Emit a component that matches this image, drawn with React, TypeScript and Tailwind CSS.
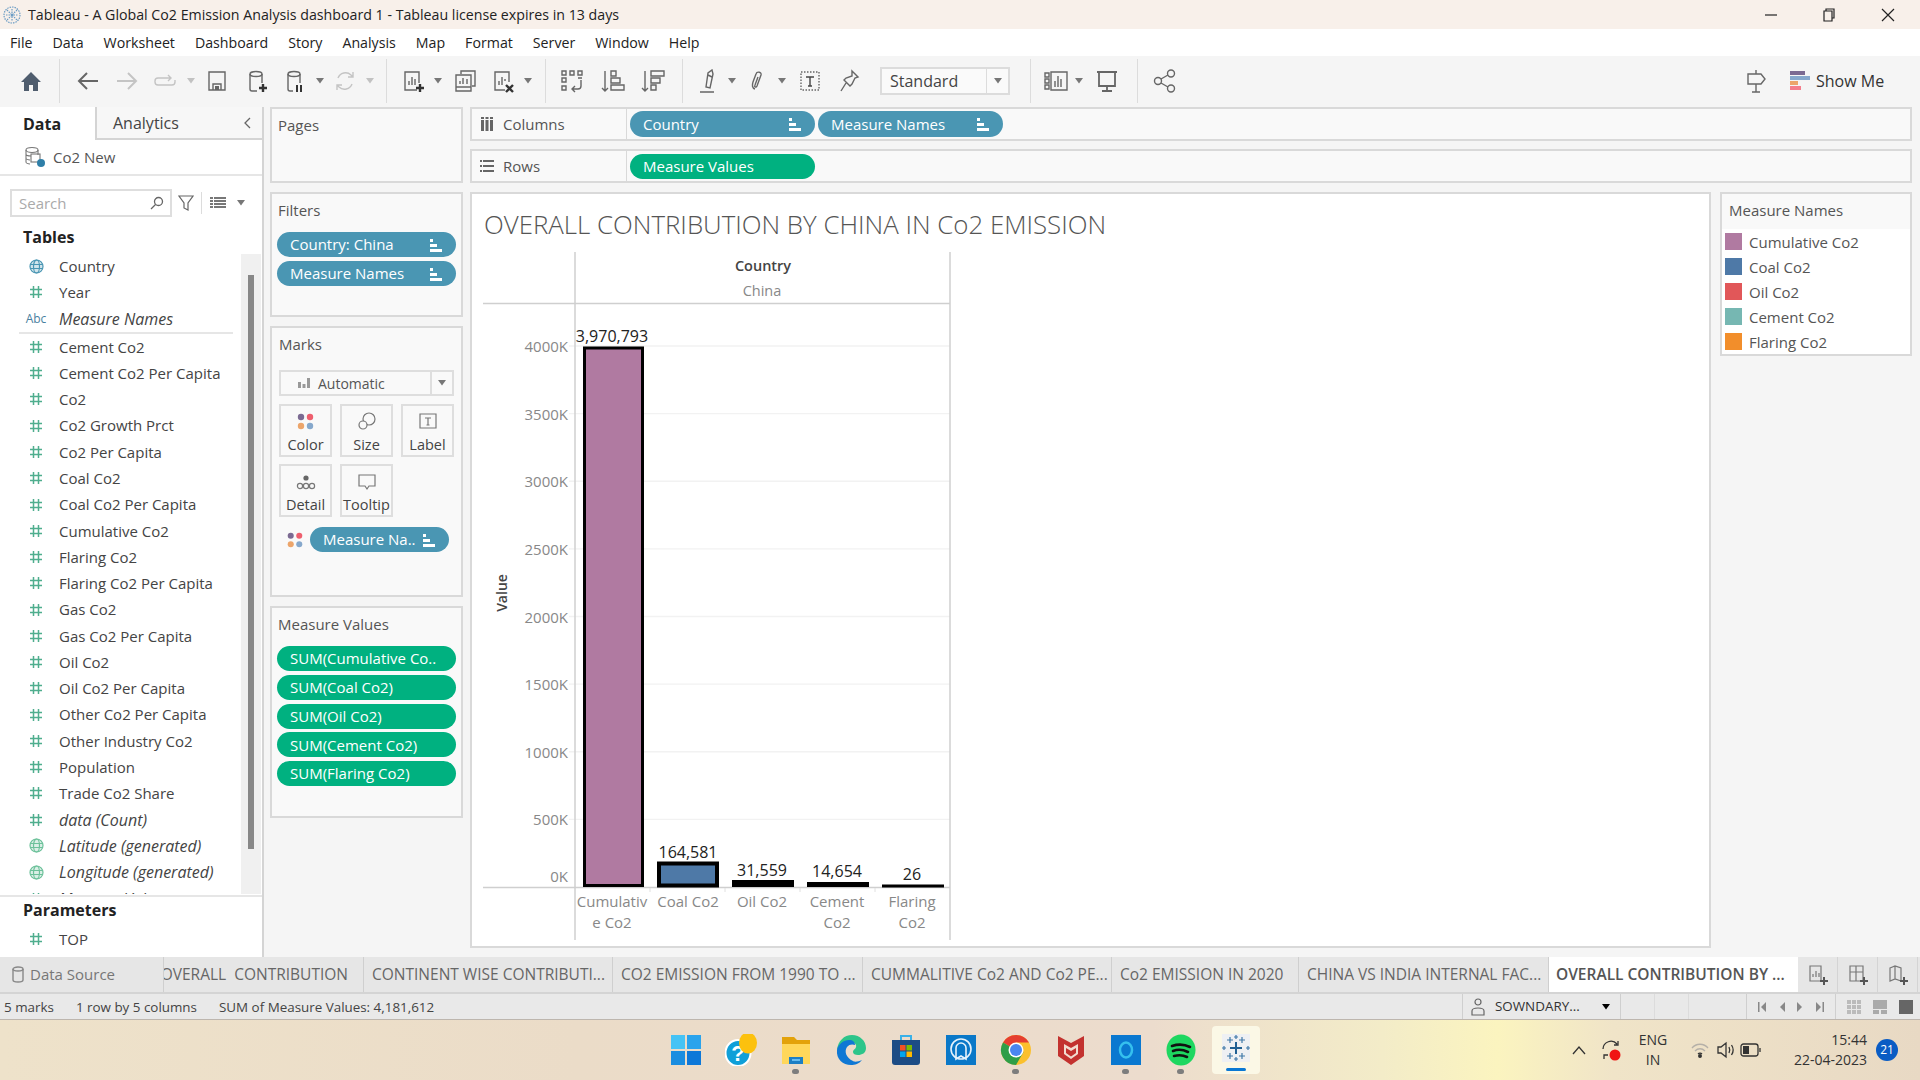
import type { ReactNode } from "react";

const BLUE = "bg-[#4a96b3]";
const GREEN = "bg-[#00b180]";

function SortMark({ className = "" }: { className?: string }) {
  return (
    <svg width="14" height="14" viewBox="0 0 14 14" className={className} fill="#fff">
      <rect x="1" y="1" width="3" height="3" />
      <rect x="1" y="6" width="7" height="3" />
      <rect x="1" y="11" width="12" height="3" />
    </svg>
  );
}

function Pill({ label, color, sort, className = "" }: { label: string; color: string; sort?: boolean; className?: string }) {
  return (
    <div className={`flex h-[25px] items-center justify-between rounded-full pl-[13px] pr-[13px] text-[15px] text-white ${color} ${className}`}>
      <span className="whitespace-nowrap">{label}</span>
      {sort && <SortMark />}
    </div>
  );
}

function Caret({ className = "" }: { className?: string }) {
  return (
    <svg width="8" height="6" viewBox="0 0 8 6" className={`shrink-0 ${className}`}>
      <path d="M0 0h8L4 5.5z" fill="#777" />
    </svg>
  );
}

function Sep({ className = "" }: { className?: string }) {
  return <div className={`h-[44px] w-px shrink-0 bg-[#dcdcdc] ${className}`} />;
}

function Tool({ className = "", faint, children }: { className?: string; faint?: boolean; children: ReactNode }) {
  return (
    <svg
      width="24"
      height="24"
      viewBox="0 0 24 24"
      fill="none"
      stroke={faint ? "#c4c4c4" : "#666"}
      strokeWidth="1.4"
      className={`shrink-0 ${className}`}
    >
      {children}
    </svg>
  );
}

function Toolbar() {
  return (
    <div className="flex h-[51px] shrink-0 items-center bg-[#f5f5f5] pb-[2px]">
      <Tool className="ml-[19px]">
        <path d="M12 3 2 13h3v9h5v-6h4v6h5v-9h3z" fill="#4f5d6e" stroke="none" />
      </Tool>
      <Sep className="ml-[16px]" />
      <Tool className="ml-[16px]"><path d="M22 12H3m8-8-8 8 8 8" strokeWidth="2" stroke="#666" /></Tool>
      <Tool className="ml-[15px]" faint><path d="M2 12h19m-8-8 8 8-8 8" strokeWidth="2" /></Tool>
      <Tool className="ml-[14px]" faint><path d="M17 9H5a3 3 0 0 0-3 3v1a3 3 0 0 0 3 3h14a3 3 0 0 0 3-3v-2M15 6l3 3-3 3" /></Tool>
      <Caret className="ml-[10px] opacity-40" />
      <Tool className="ml-[10px]"><path d="M4 3h16v18H4zM8 21v-6h8v6" /><rect x="10" y="17" width="4" height="4" fill="#666" stroke="none" /></Tool>
      <Tool className="ml-[16px]">
        <ellipse cx="11" cy="5" rx="6" ry="2.5" /><path d="M5 5v15a2 2 0 0 0 2 2h5M17 5v9" />
        <path d="M18 15v8m-4-4h8" strokeWidth="2.4" stroke="#333" />
      </Tool>
      <Tool className="ml-[14px]">
        <ellipse cx="11" cy="5" rx="6" ry="2.5" /><path d="M5 5v15a2 2 0 0 0 2 2h3M17 5v9" />
        <path d="M14 16v7m4-7v7" strokeWidth="2" stroke="#333" />
      </Tool>
      <Caret className="ml-[9px]" />
      <Tool className="ml-[9px]" faint><path d="M5 9a8 8 0 0 1 13-3l2 2M19 15a8 8 0 0 1-13 3l-2-2M20 3v5h-5M4 21v-5h5" /></Tool>
      <Caret className="ml-[9px] opacity-40" />
      <Sep className="ml-[12px]" />
      <Tool className="ml-[14px]">
        <path d="M16 21H4V3h14v11M8 16v-4m3 4V8m3 8v-6" />
        <path d="M19 15v8m-4-4h8" strokeWidth="2.4" stroke="#333" />
      </Tool>
      <Caret className="ml-[9px]" />
      <Tool className="ml-[11px]">
        <path d="M8 5V2h14v15h-3M3 6h15v12H3zM3 18v4h15v-4M7 15v-3m3 3V9m4 6v-5" />
      </Tool>
      <Tool className="ml-[14px]">
        <path d="M14 21H4V3h14v10M8 16v-4m3 4V8m3 4V10" />
        <path d="m15 16 7 7m0-7-7 7" strokeWidth="2.4" stroke="#333" />
      </Tool>
      <Caret className="ml-[9px]" />
      <Sep className="ml-[13px]" />
      <Tool className="ml-[14px]">
        <path d="M2 2h4v4H2zM10 2h4v4h-4zM18 2h4v4h-4zM2 9h4v4H2zM2 17h4v4H2zM18 9h4M21 11v6a3 3 0 0 1-3 3h-5m2-3-3 3 3 3" />
      </Tool>
      <Tool className="ml-[17px]"><path d="M4 2v20M1 19l3 3 3-3M10 2h5v5h-5zM10 9h9v5h-9zM10 16h13v5H10z" /></Tool>
      <Tool className="ml-[16px]"><path d="M4 2v20M1 19l3 3 3-3M10 2h13v5H10zM10 9h9v5h-9zM10 16h5v5h-5z" /></Tool>
      <Sep className="ml-[17px]" />
      <Tool className="ml-[15px]"><path d="m8 18 2-14 4-3 1 4-3 14zM2 23h14M10 6l4 2" /></Tool>
      <Caret className="ml-[6px]" />
      <Tool className="ml-[10px]"><path d="M9 20c-3-1-3-4-2-7l3-8c1-3 6-2 5 1l-4 11c-1 2-3 1-2-1l3-8" /></Tool>
      <Caret className="ml-[8px]" />
      <Tool className="ml-[12px]">
        <path d="M3 3h18v18H3z" strokeDasharray="1.5 1.5" />
        <path d="M8 8h8M12 8v9M10 17h4" stroke="#444" />
      </Tool>
      <Tool className="ml-[16px]"><path d="m14 2 6 6-3 1-3 6-2 2-6-6 2-2 6-2zM8 14l-5 8" /></Tool>
      <div className="ml-[18px] flex h-[28px] w-[130px] shrink-0 items-center border-2 border-[#dcdcdc] bg-[#fafafa] pl-[8px] text-[16px] text-[#444]">
        <span className="flex-1">Standard</span>
        <div className="flex h-full w-[22px] items-center justify-center border-l border-[#dcdcdc]"><Caret /></div>
      </div>
      <Sep className="ml-[20px]" />
      <Tool className="ml-[13px]">
        <path d="M1 4h4v4H1zM1 10h4v4H1zM1 16h4v4H1zM7 3h16v18H7zM11 18v-6m3 6V7m3 11v-8" />
      </Tool>
      <Caret className="ml-[7px]" />
      <Tool className="ml-[12px]"><path d="M2 3h20M4 3v14h16V3M12 17v5M7 22h10" strokeWidth="1.8" /></Tool>
      <Sep className="ml-[18px]" />
      <Tool className="ml-[15px]"><circle cx="5" cy="12" r="3.5" /><circle cx="18" cy="4.5" r="3.5" /><circle cx="18" cy="19.5" r="3.5" /><path d="m8 10 7-4M8 14l7 4" /></Tool>
      <Tool className="ml-[567px]"><path d="M12 1v4M12 15v8M8 23h8M4 5h13l4 5-4 5H4z" /></Tool>
      <svg width="20" height="20" viewBox="0 0 20 20" className="ml-[22px] shrink-0">
        <rect y="0" width="15" height="4" fill="#7b6a92" />
        <rect y="5" width="20" height="4" fill="#86a8cc" />
        <rect y="10" width="8" height="4" fill="#eca56b" />
        <rect y="15" width="11" height="4" fill="#f47e8c" />
      </svg>
      <span className="ml-[6px] text-[16px] text-[#333]">Show Me</span>
    </div>
  );
}

const FIELDS: [string, string?][] = [
  ["Cement Co2"], ["Cement Co2 Per Capita"], ["Co2"], ["Co2 Growth Prct"], ["Co2 Per Capita"], ["Coal Co2"],
  ["Coal Co2 Per Capita"], ["Cumulative Co2"], ["Flaring Co2"], ["Flaring Co2 Per Capita"], ["Gas Co2"],
  ["Gas Co2 Per Capita"], ["Oil Co2"], ["Oil Co2 Per Capita"], ["Other Co2 Per Capita"], ["Other Industry Co2"],
  ["Population"], ["Trade Co2 Share"], ["data (Count)", "i"], ["Latitude (generated)", "g"], ["Longitude (generated)", "g"],
  ["Measure Values", "i"],
];

function Hash() {
  return (
    <svg width="14" height="14" viewBox="0 0 14 14" stroke="#4fae8e" strokeWidth="1.5" fill="none">
      <path d="M4.5 1v12M9.5 1v12M1 4.5h12M1 9.5h12" />
    </svg>
  );
}

function Globe({ color }: { color: string }) {
  return (
    <svg width="15" height="15" viewBox="0 0 15 15" fill="none" stroke={color} strokeWidth="1.2">
      <circle cx="7.5" cy="7.5" r="6.5" fill={color} fillOpacity=".25" />
      <ellipse cx="7.5" cy="7.5" rx="3" ry="6.5" />
      <path d="M1 5.5h13M1 9.5h13" />
    </svg>
  );
}

function FieldRow({ icon, label, italic }: { icon: ReactNode; label: string; italic?: boolean }) {
  return (
    <div className="flex h-[26.27px] shrink-0 items-center whitespace-nowrap text-[15px] text-[#444]">
      <div className="flex w-[59px] shrink-0 justify-center pl-[14px] pr-[1px]">{icon}</div>
      <span className={italic ? "text-[16px] italic" : ""}>{label}</span>
    </div>
  );
}

function DataPane() {
  return (
    <div className="flex w-[264px] shrink-0 flex-col border-r-2 border-[#d4d4d4] bg-white">
      <div className="flex h-[33px] text-[16px]">
        <div className="flex w-[97px] items-center border-r-2 border-[#d4d4d4] pl-[23px] font-bold text-[#222]">Data</div>
        <div className="flex flex-1 items-center justify-between border-b-2 border-[#d4d4d4] bg-[#f7f7f7] pl-[16px] pr-[11px] text-[#444]">
          <span>Analytics</span>
          <svg width="8" height="12" viewBox="0 0 8 12" fill="none" stroke="#666" strokeWidth="1.3"><path d="M7 1 2 6l5 5" /></svg>
        </div>
      </div>
      <div className="flex h-[36px] items-center border-b-2 border-[#e6e6e6] pl-[24px] text-[15px] text-[#555]">
        <svg width="22" height="22" viewBox="0 0 22 22" fill="none" stroke="#777" strokeWidth="1.1">
          <ellipse cx="8" cy="4" rx="6" ry="2.5" />
          <path d="M2 4v12c0 1 2 2 4 2M14 4v5M2 8c0 1 2 2 5 2M2 12c0 1 2 2 4 2" />
          <rect x="7" y="8" width="9" height="8" />
          <circle cx="17" cy="17" r="4" fill="#2f7fa8" stroke="none" />
        </svg>
        <span className="ml-[7px]">Co2 New</span>
      </div>
      <div className="flex h-[44px] items-center pl-[10px] pt-[10px]">
        <div className="flex h-[28px] w-[162px] items-center justify-between border-2 border-[#dedede] pl-[7px] pr-[6px] text-[15px] text-[#aaa]">
          <span>Search</span>
          <svg width="14" height="14" viewBox="0 0 14 14" fill="none" stroke="#666" strokeWidth="1.3"><circle cx="8.5" cy="5.5" r="4" /><path d="M5.5 8.5 1 13" /></svg>
        </div>
        <svg width="16" height="16" viewBox="0 0 16 16" fill="none" stroke="#666" strokeWidth="1.2" className="ml-[6px]"><path d="M1 1h14L10 8v7l-4-2V8z" /></svg>
        <div className="ml-[7px] h-[22px] w-px bg-[#dcdcdc]" />
        <svg width="16" height="12" viewBox="0 0 16 12" className="ml-[8px]" fill="#777">
          <path d="M0 0h3v2H0zM4 0h12v2H4zM0 3h3v2H0zM4 3h12v2H4zM0 6h3v2H0zM4 6h12v2H4zM0 9h3v2H0zM4 9h12v2H4z" />
        </svg>
        <Caret className="ml-[11px]" />
      </div>
      <div className="flex h-[34px] items-center pl-[23px] text-[16px] font-bold text-[#222]">Tables</div>
      <div className="flex h-[640px] shrink-0">
        <div className="-mt-[1px] flex w-[241px] shrink-0 flex-col overflow-hidden">
          <FieldRow icon={<Globe color="#4a96b3" />} label="Country" />
          <FieldRow icon={<Hash />} label="Year" />
          <FieldRow icon={<span className="text-[12px] text-[#4a7fa0]">Abc</span>} label="Measure Names" italic />
          <div className="ml-[19px] h-[2px] w-[214px] shrink-0 bg-[#e6e6e6]" />
          {FIELDS.map(([label, kind]) => (
            <FieldRow key={label} icon={kind === "g" ? <Globe color="#6cc19a" /> : <Hash />} label={label} italic={!!kind} />
          ))}
        </div>
        <div className="w-[20px] bg-[#f0f0f0] pl-[7px] pt-[21px]">
          <div className="h-[574px] w-[6px] bg-[#888]" />
        </div>
      </div>
      <div className="mt-[1px] h-[2px] bg-[#e6e6e6]" />
      <div className="flex h-[29px] items-center pb-[4px] pl-[23px] text-[16px] font-bold text-[#222]">Parameters</div>
      <FieldRow icon={<Hash />} label="TOP" />
    </div>
  );
}

function Card({ title, className = "", children }: { title: string; className?: string; children?: ReactNode }) {
  return (
    <div className={`shrink-0 border-2 border-[#d9d9d9] bg-[#f9f9f9] px-[5px] ${className}`}>
      <div className="flex h-[33px] items-center pl-[1px] text-[15px] text-[#555]">{title}</div>
      {children}
    </div>
  );
}

function MarkBtn({ label, children }: { label: string; children: ReactNode }) {
  return (
    <div className="flex h-[53px] w-[53px] flex-col items-center border-2 border-[#dedede] pt-[6px] text-[14.5px] leading-[20px] text-[#444]">
      <svg width="20" height="20" viewBox="0 0 20 20" fill="none" stroke="#777" strokeWidth="1.2">{children}</svg>
      <span className="mt-[3px]">{label}</span>
    </div>
  );
}

function ColorDots() {
  return (
    <>
      <circle cx="5" cy="5" r="3.2" fill="#7b6a92" stroke="none" />
      <circle cx="14" cy="5" r="3.2" fill="#ee5f6e" stroke="none" />
      <circle cx="5" cy="14" r="3.2" fill="#eca56b" stroke="none" />
      <circle cx="14" cy="14" r="3.2" fill="#86a8cc" stroke="none" />
    </>
  );
}

function Cards() {
  return (
    <div className="ml-[6px] flex w-[193px] shrink-0 flex-col gap-[9px]">
      <Card title="Pages" className="h-[76px]" />
      <Card title="Filters" className="h-[125px]">
        <div className="mt-[5px] flex flex-col gap-[4px]">
          <Pill label="Country: China" color={BLUE} sort />
          <Pill label="Measure Names" color={BLUE} sort />
        </div>
      </Card>
      <Card title="Marks" className="h-[271px] pl-[6px]">
        <div className="ml-[1px] mt-[9px] flex h-[26px] w-[175px] items-center border-2 border-[#dedede] pl-[17px] text-[14px] text-[#555]">
          <svg width="12" height="10" viewBox="0 0 12 10" fill="#999"><path d="M0 4h3v6H0zM4.500 6h3v4h-3zM9 0h3v10H9z" /></svg>
          <span className="ml-[8px] flex-1">Automatic</span>
          <div className="flex h-full w-[22px] items-center justify-center border-l-2 border-[#dedede]"><Caret /></div>
        </div>
        <div className="ml-[1px] mt-[8px] grid w-[176px] grid-cols-3 gap-x-[7px] gap-y-[7px]">
          <MarkBtn label="Color"><ColorDots /></MarkBtn>
          <MarkBtn label="Size"><circle cx="12" cy="7" r="6" /><circle cx="6" cy="13" r="4" fill="#f9f9f9" /></MarkBtn>
          <MarkBtn label="Label"><path d="M2 2h16v14H2zM7 6h6M10 6v7M8.500 13h3" /></MarkBtn>
          <MarkBtn label="Detail">
            <circle cx="10" cy="6" r="2.6" fill="#666" stroke="none" />
            <circle cx="4" cy="14" r="2.6" /><circle cx="10" cy="14" r="2.6" /><circle cx="16" cy="14" r="2.6" />
          </MarkBtn>
          <MarkBtn label="Tooltip"><path d="M2 3h16v11h-6l-2 3-2-3H2z" /></MarkBtn>
        </div>
        <div className="mt-[10px] flex items-center pl-[8px]">
          <svg width="18" height="18" viewBox="0 0 19 19"><ColorDots /></svg>
          <Pill label="Measure Na.." color={BLUE} sort className="ml-[6px] w-[139px]" />
        </div>
      </Card>
      <Card title="Measure Values" className="h-[212px]">
        <div className="mt-[5px] flex flex-col gap-[3.8px]">
          {["SUM(Cumulative Co..", "SUM(Coal Co2)", "SUM(Oil Co2)", "SUM(Cement Co2)", "SUM(Flaring Co2)"].map((m) => (
            <Pill key={m} label={m} color={GREEN} />
          ))}
        </div>
      </Card>
    </div>
  );
}

function Shelf({ label, icon, children, className = "" }: { label: string; icon: ReactNode; children: ReactNode; className?: string }) {
  return (
    <div className={`flex h-[34px] border-2 border-[#d9d9d9] bg-[#f9f9f9] ${className}`}>
      <div className="flex w-[155px] shrink-0 items-center border-r border-[#d9d9d9] pl-[8px] text-[15px] text-[#555]">
        {icon}
        <span className="ml-[9px]">{label}</span>
      </div>
      <div className="flex items-center gap-[3px] pl-[3px]">{children}</div>
    </div>
  );
}

const TICKS = [
  ["4000K", 347], ["3500K", 414.6], ["3000K", 482.2], ["2500K", 549.9], ["2000K", 617.5],
  ["1500K", 685.1], ["1000K", 752.8], ["500K", 820.4], ["0K", 877],
] as const;

const BARS = [
  { x: 584.5, w: 58, y: 348, h: 537.5, fill: "#b07aa1", sw: 3, label: "3,970,793", lx: 612, ly: 342, a: "Cumulativ", b: "e Co2" },
  { x: 659, w: 58, y: 863.500, h: 22, fill: "#4e79a7", sw: 4, label: "164,581", lx: 688, ly: 858, a: "Coal Co2", b: "" },
  { x: 733, w: 60, y: 881, h: 5, fill: "#000", sw: 2, label: "31,559", lx: 762, ly: 876, a: "Oil Co2", b: "" },
  { x: 808, w: 60, y: 883, h: 3, fill: "#000", sw: 2, label: "14,654", lx: 837, ly: 877, a: "Cement", b: "Co2" },
  { x: 883, w: 60, y: 885.500, h: 1, fill: "#000", sw: 2, label: "26", lx: 912, ly: 880, a: "Flaring", b: "Co2" },
];

function Chart() {
  return (
    <svg width="500" height="690" viewBox="472 252 500 690" fontFamily="'Open Sans', sans-serif" fontSize="15" className="block">
      {TICKS.slice(0, 8).map(([, y]) => (
        <line key={y} x1="569" x2="950" y1={y - 1} y2={y - 1} stroke="#f2f2f2" strokeWidth="1.4" />
      ))}
      <path d="M575 252v688M950 252v688M483 303.500h467M483 887.500h467" stroke="#cfcfcf" strokeWidth="1.5" fill="none" />
      <path d="M650 888v4M725 888v4M800 888v4M875 888v4" stroke="#e0e0e0" />
      <text x="763" y="271" textAnchor="middle" fontWeight="600" fontSize="14.5" fill="#444">Country</text>
      <text x="762" y="296" textAnchor="middle" fontSize="14.500" fill="#888">China</text>
      <text transform="translate(507 593) rotate(-90)" textAnchor="middle" fontWeight="600" fontSize="14" fill="#444">Value</text>
      {TICKS.map(([t, y]) => (
        <text key={t} x="568" y={y + 5} textAnchor="end" fill="#888">{t}</text>
      ))}
      {BARS.map((b) => (
        <g key={b.label}>
          <rect x={b.x} y={b.y} width={b.w} height={b.h} fill={b.fill} stroke="#000" strokeWidth={b.sw} />
          <text x={b.lx} y={b.ly} textAnchor="middle" fontSize="16" fill="#222">{b.label}</text>
          <text x={b.lx} y="907" textAnchor="middle" fill="#888">{b.a}</text>
          {b.b && <text x={b.lx} y="928" textAnchor="middle" fill="#888">{b.b}</text>}
        </g>
      ))}
    </svg>
  );
}

const LEGEND = [
  ["Cumulative Co2", "bg-[#b07aa1]"],
  ["Coal Co2", "bg-[#4e79a7]"],
  ["Oil Co2", "bg-[#e15759]"],
  ["Cement Co2", "bg-[#76b7b2]"],
  ["Flaring Co2", "bg-[#f28e2b]"],
];

function View() {
  return (
    <div className="ml-[7px] flex w-[1442px] shrink-0 flex-col">
      <Shelf
        label="Columns"
        icon={<svg width="14" height="14" viewBox="0 0 14 14" fill="#666"><path d="M1 3h3v11H1zM5.500 3h3v11h-3zM10 3h3v11h-3zM1 0h3v2H1zM5.500 0h3v2h-3zM10 0h3v2h-3z" /></svg>}
      >
        <Pill label="Country" color={BLUE} sort className="h-[26px] w-[185px]" />
        <Pill label="Measure Names" color={BLUE} sort className="h-[26px] w-[185px]" />
      </Shelf>
      <Shelf
        label="Rows"
        className="mt-[8px]"
        icon={<svg width="14" height="14" viewBox="0 0 14 14" fill="#666"><path d="M0 1h2v2H0zM3 1h11v2H3zM0 6h2v2H0zM3 6h11v2H3zM0 11h2v2H0zM3 11h11v2H3z" /></svg>}
      >
        <Pill label="Measure Values" color={GREEN} className="w-[185px]" />
      </Shelf>
      <div className="mt-[9px] flex gap-[9px]">
        <div className="h-[756px] w-[1241px] shrink-0 border-2 border-[#d9d9d9] bg-white">
          <div className="h-[58px] pl-[12px] pt-[14px] text-[25.85px] font-light leading-[32px] text-[#555] whitespace-nowrap">OVERALL CONTRIBUTION BY CHINA IN Co2 EMISSION</div>
          <Chart />
        </div>
        <div className="h-[164px] w-[192px] shrink-0 border-2 border-[#d9d9d9] bg-white">
          <div className="flex h-[35px] items-center bg-[#f9f9f9] pb-[2px] pl-[7px] text-[15px] text-[#555]">Measure Names</div>
          <div className="flex flex-col gap-[8px] pl-[3px] pt-[4px]">
            {LEGEND.map(([label, color]) => (
              <div key={label} className="flex h-[17px] items-center text-[15px] text-[#555]">
                <div className={`h-[17px] w-[17px] ${color}`} />
                <span className="ml-[7px] pt-[1px]">{label}</span>
              </div>
            ))}
          </div>
        </div>
      </div>
    </div>
  );
}

function Tabs() {
  const tabs = [
    ["w-[249px]", "CONTINENT WISE CONTRIBUTI..."],
    ["w-[250px]", "CO2 EMISSION FROM 1990 TO ..."],
    ["w-[249px]", "CUMMALITIVE Co2 AND Co2 PE..."],
    ["w-[187px]", "Co2 EMISSION IN 2020"],
    ["w-[250px]", "CHINA VS INDIA INTERNAL FAC..."],
  ];
  return (
    <div className="flex h-[37px] shrink-0 border-b-2 border-[#d4d4d4] bg-[#e6e6e6] text-[15.5px] text-[#666]">
      <div className="flex w-[164px] shrink-0 items-center border-r border-[#cfcfcf] pl-[12px] text-[15px] text-[#777]">
        <svg width="12" height="17" viewBox="0 0 12 17" fill="none" stroke="#888" strokeWidth="1.4"><ellipse cx="6" cy="3" rx="5" ry="2" /><path d="M1 3v11c0 1 2 2 5 2s5-1 5-2V3" /></svg>
        <span className="ml-[6px]">Data Source</span>
      </div>
      <div className="flex w-[200px] shrink-0 items-center justify-end overflow-hidden border-r border-[#cfcfcf] pr-[15px] whitespace-pre">
        <span className="shrink-0">OVERALL  CONTRIBUTION</span>
      </div>
      {tabs.map(([w, label]) => (
        <div key={label} className={`flex shrink-0 items-center overflow-hidden border-r border-[#cfcfcf] pl-[8px] whitespace-nowrap ${w}`}>{label}</div>
      ))}
      <div className="flex w-[249px] shrink-0 items-center overflow-hidden bg-white pl-[7px] font-semibold text-[#555] whitespace-nowrap">OVERALL CONTRIBUTION BY ...</div>
      {[0, 1, 2].map((i) => (
        <div key={i} className="flex w-[40px] shrink-0 items-center justify-center border-r border-[#d4d4d4]">
          <svg width="22" height="22" viewBox="0 0 22 22" fill="none" stroke="#777" strokeWidth="1.2">
            {i === 0 && <path d="M3 2h11v15H3zM6 13v-3m3 3V7m3 6V9" />}
            {i === 1 && <path d="M3 2h13v15H3zM9 2v15M3 8h13" />}
            {i === 2 && <path d="M3 4l5-2 6 2v13l-6-2-5 2zM8 2v13" />}
            <path d="M17 13v8m-4-4h8" stroke="#555" strokeWidth="2" />
          </svg>
        </div>
      ))}
    </div>
  );
}

function StatusBar() {
  return (
    <div className="flex h-[26px] shrink-0 items-center border-b border-[#bdb6ae] bg-[#e9e9e9] text-[13.4px] text-[#444]">
      <span className="ml-[4px] pt-[1px]">5 marks</span>
      <span className="ml-[22px] pt-[1px]">1 row by 5 columns</span>
      <span className="ml-[22px] pt-[1px]">SUM of Measure Values: 4,181,612</span>
      <div className="ml-auto flex h-full items-center text-[#333]">
        <div className="flex h-full w-[159px] items-center border-x border-[#cfcfcf] pl-[8px]">
          <svg width="14" height="18" viewBox="0 0 14 18" fill="none" stroke="#666" strokeWidth="1.2"><circle cx="7" cy="4" r="3" /><path d="M1 17v-4c0-2 2-3 6-3s6 1 6 3v4z" /></svg>
          <span className="ml-[10px] flex-1">SOWNDARY...</span>
          <Caret className="mr-[10px] brightness-0" />
        </div>
        <div className="h-full w-[34px] border-r border-[#dcdcdc]" />
        <div className="h-full w-[34px] border-r border-[#dcdcdc]" />
        <div className="h-full w-[58px] border-r border-[#cfcfcf]" />
        <div className="flex h-full w-[89px] items-center justify-between border-r border-[#cfcfcf] px-[11px]">
          <svg width="8" height="10" viewBox="0 0 8 10" fill="#888"><path d="M0 0h1.500v10H0zM8 0v10L3 5z" /></svg>
          <svg width="6" height="10" viewBox="0 0 6 10" fill="#888"><path d="M6 0v10L1 5z" /></svg>
          <svg width="6" height="10" viewBox="0 0 6 10" fill="#888"><path d="M0 0v10l5-5z" /></svg>
          <svg width="8" height="10" viewBox="0 0 8 10" fill="#888"><path d="M6.500 0H8v10H6.500zM0 0v10l5-5z" /></svg>
        </div>
        <div className="flex h-full items-center gap-[12px] pl-[11px] pr-[7px]">
          <svg width="14" height="14" viewBox="0 0 14 14" fill="#bbb"><path d="M0 0h4v4H0zM5 0h4v4H5zM10 0h4v4h-4zM0 5h4v4H0zM5 5h4v4H5zM10 5h4v4h-4zM0 10h4v4H0zM5 10h4v4H5zM10 10h4v4h-4z" /></svg>
          <svg width="14" height="14" viewBox="0 0 14 14" fill="#aaa"><path d="M0 0h14v9H0zM0 10h6v4H0zM8 10h6v4H8z" /></svg>
          <div className="h-[14px] w-[14px] bg-[#666]" />
        </div>
      </div>
    </div>
  );
}

function TaskIcon({ dot, children }: { dot?: boolean; children: ReactNode }) {
  return (
    <div className="flex h-full w-[55px] shrink-0 flex-col items-center pt-[14px]">
      <svg width="32" height="32" viewBox="0 0 32 32">{children}</svg>
      {dot && <div className="mt-[3px] h-[5px] w-[7px] rounded-full bg-[#7d7d7d]" />}
    </div>
  );
}

function Taskbar() {
  return (
    <div className="flex h-[60px] shrink-0 items-stretch bg-[linear-gradient(90deg,#eee2ca_0%,#ebdcc8_30%,#ecdccd_60%,#f3ecc8_72%,#fbf4bf_78%,#f0e4c8_84%,#e8d9c4_100%)]">
      <div className="ml-[658px] flex">
        <TaskIcon>
          <path d="M1 1h14v14H1z" fill="#45c3f5" /><path d="M17 1h14v14H17z" fill="#2aa3ec" />
          <path d="M1 17h14v14H1z" fill="#1a8de0" /><path d="M17 17h14v14H17z" fill="#0d78d8" />
        </TaskIcon>
        <TaskIcon>
          <ellipse cx="13" cy="19" rx="12.500" ry="13" fill="#0f9fd8" stroke="#fff" strokeWidth="2" />
          <text x="13" y="27" textAnchor="middle" fontSize="22" fontWeight="700" fill="#fff" fontFamily="'Liberation Sans', sans-serif">?</text>
          <ellipse cx="23" cy="9" rx="9" ry="10.500" fill="#fcc10e" />
        </TaskIcon>
        <TaskIcon dot>
          <path d="M2 3h12l3 3h13v24H2z" fill="#e3a20a" /><path d="M2 10h28v20H2z" fill="#ffd75a" />
          <path d="M9 23h14v7H9z" fill="#1d7fc4" /><path d="M12 26h8" stroke="#7fd0ff" strokeWidth="1.500" />
        </TaskIcon>
        <TaskIcon>
          <path d="M2 16C3 7 9 1 17 1c8 0 14 6 14 13 0 5-4 7-8 7-3 0-5-1-5-3 0-3 4-3 3-7-1-3-5-4-8-3-5 1-8 4-11 8z" fill="#2dc58a" />
          <path d="M2 16c1-6 7-10 12-10 4 0 6 2 6 5-2-1-6-1-8 2-3 4-1 11 6 14 1 1 5 1 9-1-3 4-7 5-11 5C8 31 1 25 2 16z" fill="#0f78d4" />
        </TaskIcon>
        <TaskIcon>
          <path d="M11 6V2h10v4" fill="none" stroke="#3ab1e8" strokeWidth="2" />
          <path d="M2 6h28v22a3 3 0 0 1-3 3H5a3 3 0 0 1-3-3z" fill="#1c4c85" />
          <path d="M10 11h5.500v5.500H10z" fill="#f25022" /><path d="M16.500 11H22v5.500h-5.500z" fill="#7fba00" />
          <path d="M10 17.500h5.500V23H10z" fill="#00a4ef" /><path d="M16.500 17.500H22V23h-5.500z" fill="#ffb900" />
        </TaskIcon>
        <TaskIcon>
          <path d="M1 1h30v30H1z" fill="#0a78c8" />
          <circle cx="16" cy="15" r="10" fill="none" stroke="#e6f2fb" strokeWidth="1.600" />
          <path d="M11 25V14a5 5 0 0 1 10 0v11l-5-3z" fill="none" stroke="#e6f2fb" strokeWidth="1.600" />
        </TaskIcon>
        <TaskIcon dot>
          <circle cx="16" cy="16" r="15" fill="#fbc02d" />
          <path d="M16 16 3 8.500A15 15 0 0 1 29 8.500H16z" fill="#e53e30" />
          <path d="M16 16 3 8.500A15 15 0 0 0 16 31l7.500-13z" fill="#2f9e48" />
          <circle cx="16" cy="16" r="7.500" fill="#fff" /><circle cx="16" cy="16" r="6" fill="#4a86f0" />
        </TaskIcon>
        <TaskIcon>
          <path d="M3 2 16 9l13-7v20l-13 9-13-9z" fill="#c3322f" />
          <path d="M9 10v10l7 5 7-5V10l-7 4z" fill="#f2dcd0" />
          <path d="M11 14v5l5 3.500 5-3.500v-5l-5 3z" fill="#c3322f" />
        </TaskIcon>
        <TaskIcon dot>
          <path d="M1 1h30v30H1z" fill="#0a78d0" />
          <ellipse cx="16" cy="16" rx="6" ry="7.500" fill="none" stroke="#35c0ee" strokeWidth="2.500" />
        </TaskIcon>
        <TaskIcon dot>
          <ellipse cx="16" cy="16" rx="14.500" ry="15.500" fill="#1ed760" />
          <path d="M7 12c6-2 12-2 18 1M8 17c5-2 11-1 15 1M9 22c4-1 9-1 13 1" fill="none" stroke="#111" strokeWidth="2.600" strokeLinecap="round" />
        </TaskIcon>
        <div className="flex h-full w-[55px] shrink-0 items-start justify-center pt-[6px]">
          <div className="flex h-[48px] w-[48px] flex-col items-center rounded-[4px] bg-[#fbf8e6] pt-[8px]">
            <svg width="28" height="28" viewBox="0 0 28 28" className="bg-[#eef0f3]" stroke="#3f78a8" fill="none">
              <path d="M14 8v12M8 14h12" strokeWidth="2" stroke="#1f5f92" />
              <path d="M8 3v6M5 6h6M20 3v6M17 6h6M8 19v6M5 22h6M20 19v6M17 22h6M14 1v4M12 3h4M14 23v4M12 25h4M2 12v4M0 14h4M26 12v4M24 14h4" strokeWidth="1.200" />
            </svg>
            <div className="mt-[6px] h-[3px] w-[20px] rounded-full bg-[#0a78d4]" />
          </div>
        </div>
      </div>
      <div className="flex items-center">
        <svg width="16" height="10" viewBox="0 0 16 10" className="ml-[308px] shrink-0" fill="none" stroke="#333" strokeWidth="1.300"><path d="m2 9 6-7 6 7" /></svg>
        <svg width="24" height="24" viewBox="0 0 24 24" className="ml-[12px] shrink-0" fill="none" stroke="#333" strokeWidth="1.300">
          <path d="M4 11a8 8 0 0 1 14-5m1-3v4h-4M5 21v-4h4" />
          <circle cx="16" cy="17" r="5.500" fill="#f01414" stroke="none" />
        </svg>
        <div className="ml-[10px] flex w-[40px] shrink-0 flex-col items-center text-[14px] leading-[20px] text-[#333]">
          <span>ENG</span>
          <span>IN</span>
        </div>
        <svg width="20" height="20" viewBox="0 0 20 20" className="ml-[17px] shrink-0" fill="none" stroke="#333" strokeWidth="1.300">
          <path d="M2 8c4-5 12-5 16 0M5 11c3-3 7-3 10 0" stroke="#b5b0a8" /><path d="M8 14c1-1 3-1 4 0" />
          <circle cx="10" cy="16" r="1.300" fill="#333" />
        </svg>
        <svg width="20" height="20" viewBox="0 0 20 20" className="ml-[6px] shrink-0" fill="none" stroke="#333" strokeWidth="1.300">
          <path d="M2 7h3l5-4v14l-5-4H2zM13 7c1 2 1 4 0 6M15.500 5c2 3 2 7 0 10" />
        </svg>
        <svg width="22" height="14" viewBox="0 0 22 14" className="ml-[4px] shrink-0" fill="none" stroke="#333" strokeWidth="1.300">
          <rect x="1" y="1" width="17" height="12" rx="2.500" /><rect x="3" y="3" width="6" height="8" fill="#333" stroke="none" /><path d="M20 5v4" />
        </svg>
        <div className="flex w-[105px] shrink-0 flex-col items-end text-[14px] leading-[20px] text-[#333]">
          <span>15:44</span>
          <span>22-04-2023</span>
        </div>
        <div className="ml-[9px] flex h-[22px] w-[22px] shrink-0 items-center justify-center rounded-full bg-[#0a5cc4] text-[12px] text-white">21</div>
      </div>
    </div>
  );
}

export default function App() {
  return (
    <div className="flex h-[1080px] w-[1920px] flex-col overflow-hidden bg-[#f5f5f5] font-['Open_Sans',sans-serif]">
      <div className="flex h-[29px] shrink-0 items-center bg-[#f8f0ea] text-[14.2px] text-[#222]">
        <svg width="20" height="20" viewBox="0 0 20 20" className="ml-[2px]" fill="none" stroke="#6b9cc4" strokeWidth="1.200" strokeDasharray="1.500 1">
          <circle cx="10" cy="10" r="8" />
          <path d="M10 4v12M4 10h12M5 5l10 10M15 5 5 15" />
        </svg>
        <span className="ml-[6px]">Tableau - A Global Co2 Emission Analysis dashboard 1 - Tableau license expires in 13 days</span>
        <svg width="12" height="12" viewBox="0 0 12 12" className="ml-auto" stroke="#222" strokeWidth="1.200" fill="none"><path d="M0 6h12" /></svg>
        <svg width="12" height="14" viewBox="0 0 12 14" className="ml-[46px]" stroke="#222" strokeWidth="1.200" fill="none"><path d="M1 3h8v10H1zM3 3V1h8v9H9" /></svg>
        <svg width="14" height="14" viewBox="0 0 14 14" className="ml-[46px] mr-[25px]" stroke="#222" strokeWidth="1.200" fill="none"><path d="m1 1 12 12M13 1 1 13" /></svg>
      </div>
      <div className="flex h-[27px] shrink-0 items-center gap-[20px] bg-white pl-[10px] text-[14.2px] text-[#222]">
        {["File", "Data", "Worksheet", "Dashboard", "Story", "Analysis", "Map", "Format", "Server", "Window", "Help"].map((m) => (
          <span key={m}>{m}</span>
        ))}
      </div>
      <Toolbar />
      <div className="flex h-[850px] shrink-0">
        <DataPane />
        <Cards />
        <View />
      </div>
      <Tabs />
      <StatusBar />
      <Taskbar />
    </div>
  );
}
